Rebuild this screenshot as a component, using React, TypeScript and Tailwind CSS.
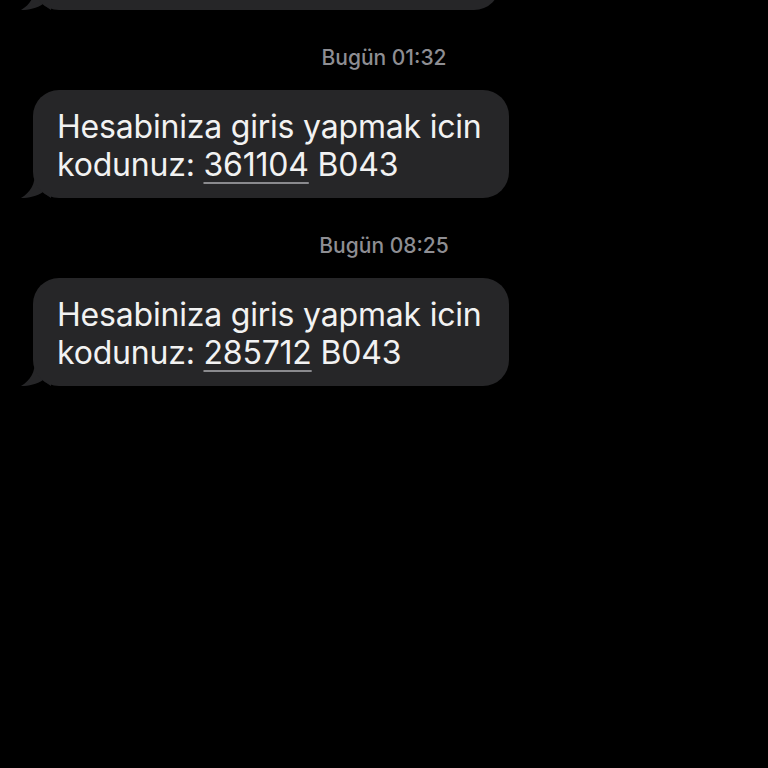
import type { ReactNode } from 'react';

const font = { fontFamily: 'Inter, "Liberation Sans", sans-serif' };

function Tail() {
  return (
    <svg
      className="absolute -left-[12px] bottom-0"
      width="30"
      height="26"
      viewBox="0 0 30 26"
      fill="#262628"
    >
      <path d="M14 0 C14 12 10 20 0 26 C8 26 16 24 22 20 C24 22 27 24 30 26 L30 0 Z" />
    </svg>
  );
}

function Bubble({ children, className = '' }: { children?: ReactNode; className?: string }) {
  return (
    <div className={`relative ${className}`}>
      <Tail />
      <div className="relative min-h-[108px] rounded-[26px] bg-[#262628] pl-6 pr-4 pt-[18px] pb-[14px] text-[32px] leading-[38px] tracking-[-0.2px] text-[#f2f2f2]">
        {children}
      </div>
    </div>
  );
}

function Code({ value }: { value: string }) {
  return (
    <span className="underline decoration-[#8a8a8e] decoration-[1.5px] underline-offset-[6px]">{value}</span>
  );
}

function Stamp({ day, time }: { day: string; time: string }) {
  return (
    <div className="flex h-6 items-center justify-center text-[21px] font-medium text-[#8e8e93]">
      {day} {time}
    </div>
  );
}

export default function App() {
  const messages = [
    { time: '01:32', code: '361104' },
    { time: '08:25', code: '285712' },
  ];

  return (
    <div className="h-[768px] w-[768px] overflow-hidden bg-black" style={font}>
      <div className="flex flex-col pl-[33px]">
        {/* previous message, scrolled mostly out of view */}
        <Bubble className="-mt-[98px] w-[467px]" />
        {messages.map((m) => (
          <div key={m.time} className="flex flex-col">
            <div className="-ml-[33px] mt-9 mb-5">
              <Stamp day="Bugün" time={m.time} />
            </div>
            <Bubble className="w-[476px]">
              Hesabiniza giris yapmak icin
              <br />
              kodunuz: <Code value={m.code} /> B043
            </Bubble>
          </div>
        ))}
      </div>
    </div>
  );
}
